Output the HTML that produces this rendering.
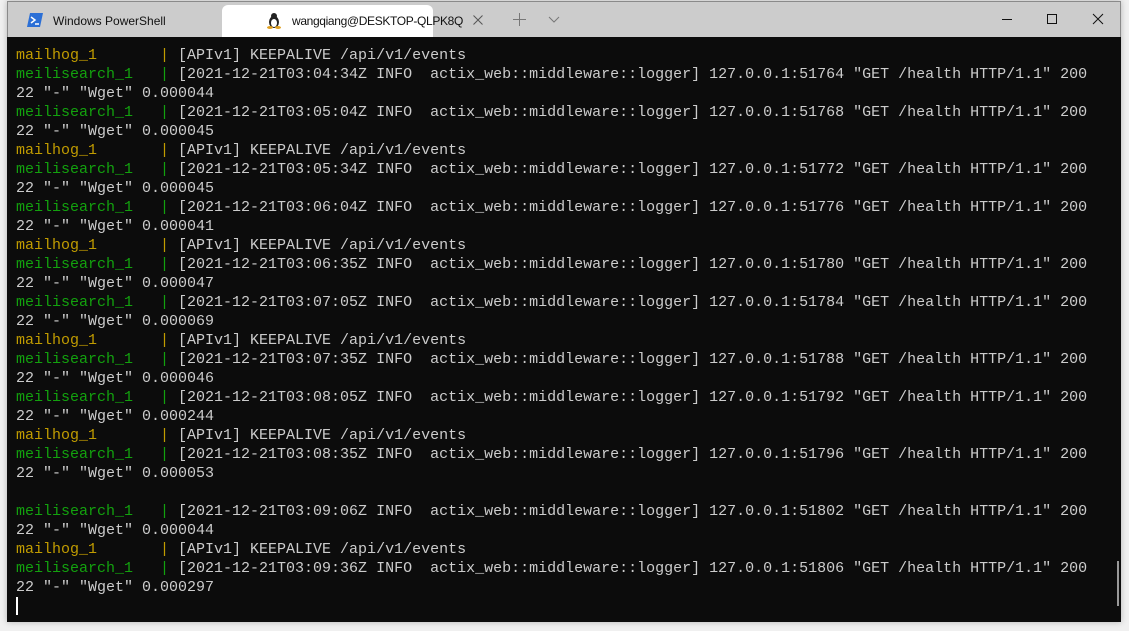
<!DOCTYPE html>
<html><head><meta charset="utf-8"><style>
html,body{margin:0;padding:0;width:1129px;height:631px;background:#f0f0f0;overflow:hidden;position:relative;font-family:"Liberation Sans",sans-serif}
.win{position:absolute;left:7px;top:1px;width:1114px;height:621px;background:#cccccc;border:1px solid #8a8a8a;box-sizing:border-box;box-shadow:0 0 6px rgba(0,0,0,.25)}
.term{position:absolute;left:7px;top:37px;width:1114px;height:585px;background:#0c0c0c}
.tab2{position:absolute;left:222px;top:5px;width:211px;height:32px;background:#fff;border-radius:6px 6px 0 0}
.t{position:absolute;font-size:12px;color:#111}
pre{position:absolute;left:16px;top:46px;margin:0;font-family:"Liberation Mono",monospace;font-size:15px;line-height:19px;color:#cccccc}
.y{color:#c19c00}.g{color:#13a10e}
</style></head><body>
<div class="win"></div>
<div class="term"></div>
<svg style="position:absolute;left:27px;top:13px" width="16" height="14"><polygon points="3,0 16,0 13,14 0,14" fill="#2b6fd6"/><path d="M4 4l4 3-4 3M8 11h4" stroke="#fff" stroke-width="1.5" fill="none"/></svg>
<div class="t" style="left:53px;top:14px">Windows PowerShell</div>
<svg style="position:absolute;left:232px;top:15px" width="10" height="10"><path d="M0.5 0.5l9 9M9.5 0.5l-9 9" stroke="#555"/></svg>
<div class="tab2"></div>
<svg style="position:absolute;left:267px;top:12px" width="14" height="17"><ellipse cx="7" cy="10" rx="5" ry="6" fill="#222"/><ellipse cx="7" cy="11" rx="3" ry="4" fill="#fff"/><circle cx="7" cy="4" r="3" fill="#222"/><ellipse cx="3" cy="15.5" rx="3" ry="1.5" fill="#e0a020"/><ellipse cx="11" cy="15.5" rx="3" ry="1.5" fill="#e0a020"/></svg>
<div class="t" style="left:292px;top:14px;letter-spacing:-0.35px">wangqiang@DESKTOP-QLPK8Q</div>
<svg style="position:absolute;left:473px;top:15px" width="10" height="10"><path d="M0.5 0.5l9 9M9.5 0.5l-9 9" stroke="#555"/></svg>
<svg style="position:absolute;left:513px;top:13px" width="13" height="13"><path d="M6.5 0v13M0 6.5h13" stroke="#777"/></svg>
<svg style="position:absolute;left:548px;top:16px" width="12" height="7"><path d="M1 1l5 5 5-5" stroke="#777" fill="none"/></svg>
<svg style="position:absolute;left:1000px;top:13px" width="110" height="13"><path d="M2 6.5h10" stroke="#111"/><rect x="47.5" y="1.5" width="9" height="9" stroke="#111" fill="none"/><path d="M93 1l10 10M103 1l-10 10" stroke="#111"/></svg>
<pre><span class="y">mailhog_1       | </span>[APIv1] KEEPALIVE /api/v1/events
<span class="g">meilisearch_1   | </span>[2021-12-21T03:04:34Z INFO  actix_web::middleware::logger] 127.0.0.1:51764 "GET /health HTTP/1.1" 200
22 "-" "Wget" 0.000044
<span class="g">meilisearch_1   | </span>[2021-12-21T03:05:04Z INFO  actix_web::middleware::logger] 127.0.0.1:51768 "GET /health HTTP/1.1" 200
22 "-" "Wget" 0.000045
<span class="y">mailhog_1       | </span>[APIv1] KEEPALIVE /api/v1/events
<span class="g">meilisearch_1   | </span>[2021-12-21T03:05:34Z INFO  actix_web::middleware::logger] 127.0.0.1:51772 "GET /health HTTP/1.1" 200
22 "-" "Wget" 0.000045
<span class="g">meilisearch_1   | </span>[2021-12-21T03:06:04Z INFO  actix_web::middleware::logger] 127.0.0.1:51776 "GET /health HTTP/1.1" 200
22 "-" "Wget" 0.000041
<span class="y">mailhog_1       | </span>[APIv1] KEEPALIVE /api/v1/events
<span class="g">meilisearch_1   | </span>[2021-12-21T03:06:35Z INFO  actix_web::middleware::logger] 127.0.0.1:51780 "GET /health HTTP/1.1" 200
22 "-" "Wget" 0.000047
<span class="g">meilisearch_1   | </span>[2021-12-21T03:07:05Z INFO  actix_web::middleware::logger] 127.0.0.1:51784 "GET /health HTTP/1.1" 200
22 "-" "Wget" 0.000069
<span class="y">mailhog_1       | </span>[APIv1] KEEPALIVE /api/v1/events
<span class="g">meilisearch_1   | </span>[2021-12-21T03:07:35Z INFO  actix_web::middleware::logger] 127.0.0.1:51788 "GET /health HTTP/1.1" 200
22 "-" "Wget" 0.000046
<span class="g">meilisearch_1   | </span>[2021-12-21T03:08:05Z INFO  actix_web::middleware::logger] 127.0.0.1:51792 "GET /health HTTP/1.1" 200
22 "-" "Wget" 0.000244
<span class="y">mailhog_1       | </span>[APIv1] KEEPALIVE /api/v1/events
<span class="g">meilisearch_1   | </span>[2021-12-21T03:08:35Z INFO  actix_web::middleware::logger] 127.0.0.1:51796 "GET /health HTTP/1.1" 200
22 "-" "Wget" 0.000053

<span class="g">meilisearch_1   | </span>[2021-12-21T03:09:06Z INFO  actix_web::middleware::logger] 127.0.0.1:51802 "GET /health HTTP/1.1" 200
22 "-" "Wget" 0.000044
<span class="y">mailhog_1       | </span>[APIv1] KEEPALIVE /api/v1/events
<span class="g">meilisearch_1   | </span>[2021-12-21T03:09:36Z INFO  actix_web::middleware::logger] 127.0.0.1:51806 "GET /health HTTP/1.1" 200
22 "-" "Wget" 0.000297</pre>
<div style="position:absolute;left:16px;top:597px;width:2px;height:18px;background:#fff"></div>
<div style="position:absolute;left:1117px;top:561px;width:2px;height:45px;background:#999"></div>
</body></html>
